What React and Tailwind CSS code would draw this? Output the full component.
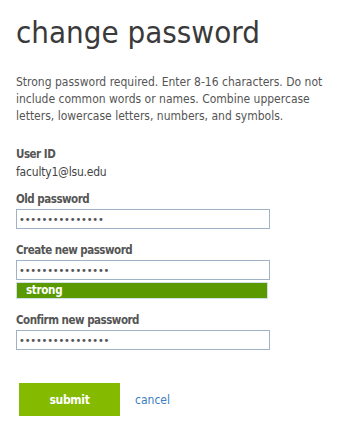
import React from 'react';

const font = { fontFamily: '"DejaVu Sans Condensed", "DejaVu Sans", sans-serif' };

const Field = ({ label, value, children }) => (
  <div className="flex flex-col">
    <label className="text-[11.5px] leading-[14px] font-bold tracking-[-0.5px] text-[#555]">{label}</label>
    <input
      type="password"
      readOnly
      value={value}
      className="mt-[3px] w-[254px] h-[20px] border border-[#9fb2c6] bg-white px-[2px] text-[11px] tracking-[-0.2px] text-[#555] outline-none"
    />
    {children}
  </div>
);

export default function App() {
  return (
    <div className="bg-white min-h-[433px] pl-[16px] pt-[14px] text-[#444]" style={font}>
      <h1 className="text-[31px] leading-[36px] font-normal text-[#3a3a3a]">change password</h1>

      <p className="mt-[24px] w-[320px] text-[12px] leading-[17px] text-[#555]">
        Strong password required. Enter 8-16 characters. Do not include common words or names. Combine uppercase letters, lowercase letters, numbers, and symbols.
      </p>

      <div className="mt-[22px] flex flex-col">
        <div className="text-[11.5px] leading-[14px] font-bold tracking-[-0.5px] text-[#555]">User ID</div>
        <div className="mt-[4px] text-[12px] leading-[14px] tracking-[-0.2px] text-[#444]">faculty1@lsu.edu</div>
      </div>

      <div className="mt-[13px] flex flex-col gap-[14px]">
        <Field label="Old password" value="aaaaaaaaaaaaaaa" />
        <Field label="Create new password" value="aaaaaaaaaaaaaaaa">
          <div className="mt-[2px] w-[252px] h-[17px] border border-[#cfe0e6] bg-[#5a9900] pl-[9px] text-[11.5px] leading-[15px] font-bold tracking-[-0.3px] text-white">
            strong
          </div>
        </Field>
        <Field label="Confirm new password" value="aaaaaaaaaaaaaaaa" />
      </div>

      <div className="mt-[33px] flex items-center gap-[15px] pl-[3px]">
        <button className="w-[101px] h-[33px] bg-[#84bb00] text-white text-[12px] font-bold tracking-[-0.3px]">submit</button>
        <a href="#" className="text-[12px] text-[#3a7ec2]">cancel</a>
      </div>
    </div>
  );
}
